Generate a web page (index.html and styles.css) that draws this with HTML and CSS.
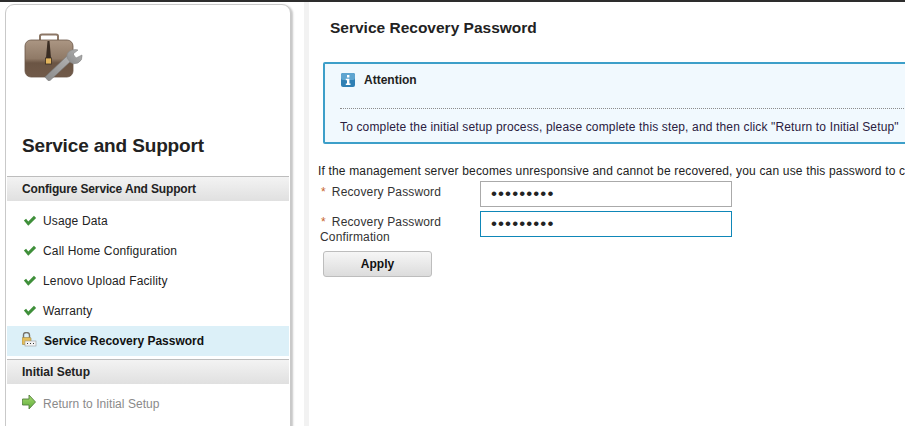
FILE: index.html
```html
<!DOCTYPE html>
<html lang="en">
	<head>
		<meta charset="UTF-8" />
		<meta name="viewport" content="width=device-width, initial-scale=1.0" />
		<title>Service and Support</title>
		<link rel="stylesheet" href="styles.css">
	</head>

	<body>
		<div class="topbar"></div>
		<div class="page">
			<div class="sidebar">
				<div class="sidebar-head">
					<svg class="case-icon" width="62" height="50" viewBox="0 0 62 50">
						<defs>
							<linearGradient id="caseFill" x1="0" y1="0" x2="0" y2="1">
								<stop offset="0" stop-color="#ab9683" />
								<stop offset="0.5" stop-color="#907a67" />
								<stop offset="0.62" stop-color="#6b5544" />
								<stop offset="1" stop-color="#715a49" />
							</linearGradient>
							<linearGradient id="wrenchFill" x1="0" y1="1" x2="1" y2="0">
								<stop offset="0" stop-color="#8a8a8a" />
								<stop offset="1" stop-color="#b4b4b4" />
							</linearGradient>
						</defs>
						<path d="M16 9V4Q16 2.500 18 2.500H32Q34 2.500 34 4V9" fill="none" stroke="#8c7766" stroke-width="2" />
						<rect x="1" y="8" width="48" height="37" rx="6" fill="url(#caseFill)" stroke="#6a5646" stroke-width="0.800" />
						<path d="M23.500 9H25.500L27 26H22Z" fill="#3a2d23" />
						<rect x="21.500" y="26" width="6" height="6" fill="#e2b45c" stroke="#3a2d23" stroke-width="0.800" />
						<path d="M21 45L24 48.500L26 48.500L48 28L43 24Z" fill="url(#wrenchFill)" stroke="#777" stroke-width="0.600" />
						<path d="M43 26Q42 20 48 18Q52 17 54 18L49 22L52 26L58 23Q59 28 54 31Q49 33 46 30Z" fill="url(#wrenchFill)" stroke="#888" stroke-width="0.600" />
					</svg>
					<h1 class="sidebar-title">Service and Support</h1>
				</div>

				<div class="group-head">Configure Service And Support</div>
				<ul class="nav">
					<li class="nav-item">
						<svg class="nav-icon" width="14" height="14" viewBox="0 0 16 16"><path d="M1 7.500L3.500 5.500L6 8.500L12.500 2L15 4.500L6 13.500Z" fill="#3f8f3a" /></svg>
						<span>Usage Data</span>
					</li>
					<li class="nav-item">
						<svg class="nav-icon" width="14" height="14" viewBox="0 0 16 16"><path d="M1 7.500L3.500 5.500L6 8.500L12.500 2L15 4.500L6 13.500Z" fill="#3f8f3a" /></svg>
						<span>Call Home Configuration</span>
					</li>
					<li class="nav-item">
						<svg class="nav-icon" width="14" height="14" viewBox="0 0 16 16"><path d="M1 7.500L3.500 5.500L6 8.500L12.500 2L15 4.500L6 13.500Z" fill="#3f8f3a" /></svg>
						<span>Lenovo Upload Facility</span>
					</li>
					<li class="nav-item">
						<svg class="nav-icon" width="14" height="14" viewBox="0 0 16 16"><path d="M1 7.500L3.500 5.500L6 8.500L12.500 2L15 4.500L6 13.500Z" fill="#3f8f3a" /></svg>
						<span>Warranty</span>
					</li>
					<li class="nav-item active">
						<svg class="nav-icon lock-icon" width="16" height="16" viewBox="2 1 16 16">
							<path d="M3.500 7V4Q3.500 1.500 6.500 1.500Q9.500 1.500 9.500 4V7" fill="none" stroke="#77736a" stroke-width="1.400" />
							<rect x="2" y="6.500" width="9" height="7" rx="1" fill="#e3bd5a" stroke="#9a8340" stroke-width="0.600" />
							<rect x="5" y="10" width="11" height="5" fill="#f4f4f4" stroke="#9a9a9a" stroke-width="0.600" />
							<path d="M7 12.500H8M10 12.500H11M13 12.500H14" stroke="#333" stroke-width="1.200" />
						</svg>
						<span>Service Recovery Password</span>
					</li>
				</ul>

				<div class="group-head second">Initial Setup</div>
				<ul class="nav">
					<li class="nav-item muted">
						<svg class="nav-icon arrow-icon" width="16" height="16" viewBox="1 0 16 16">
							<defs>
								<linearGradient id="arrowFill" x1="0" y1="0" x2="0" y2="1">
									<stop offset="0" stop-color="#a5d86e" />
									<stop offset="1" stop-color="#5fae3c" />
								</linearGradient>
							</defs>
							<path d="M1.500 5H8V1L14.500 8L8 15V11H1.500Q1 8 1.500 5Z" fill="url(#arrowFill)" stroke="#55803f" stroke-width="0.900" />
						</svg>
						<span>Return to Initial Setup</span>
					</li>
				</ul>
			</div>

			<div class="divider-strip"></div>

			<div class="main">
				<h2 class="main-title">Service Recovery Password</h2>

				<div class="attention">
					<div class="attention-head">
						<svg class="info-icon" width="14" height="14" viewBox="0 0 14 14">
							<rect width="14" height="14" rx="2" fill="#2f80b4" />
							<rect width="14" height="7" rx="2" fill="#5fa5d0" />
							<path d="M6 2H8.400V4.500H6ZM4.800 5.800H8.400V10.500H9.500V12H4.800V10.500H6V7.300H4.800Z" fill="#fff" />
						</svg>
						<span>Attention</span>
					</div>
					<p class="attention-text">To complete the initial setup process, please complete this step, and then click "Return to Initial Setup"</p>
				</div>

				<p class="intro">If the management server becomes unresponsive and cannot be recovered, you can use this password to c</p>

				<div class="field">
					<label class="field-label">Recovery Password</label>
					<input class="field-input" type="password" value="123456789">
				</div>
				<div class="field">
					<label class="field-label">Recovery Password Confirmation</label>
					<input class="field-input focused" type="password" value="123456789">
				</div>

				<button class="apply-btn" type="button">Apply</button>
			</div>
		</div>
	</body>
</html>
```

FILE: styles.css
```css
:root {
	--text-color: #222;
	--line-color: #c4c4c4;
	--accent: #3d9fc9;
}

* {
	box-sizing: border-box;
}

html,
body {
	height: 100%;
}

body {
	margin: 0;
	overflow: hidden;
	font-family: "Liberation Sans", Arial, sans-serif;
	font-size: 12px;
	color: var(--text-color);
	background-color: #fff;
}

.topbar {
	height: 2px;
	background-color: #2d2d2d;
}

.page {
	display: flex;
	height: 424px;
}

.sidebar {
	flex: none;
	width: 286px;
	height: 440px;
	margin: 2px 0 0 5px;
	padding: 0 1px;
	background-color: #fff;
	border: 1px solid #c9c9c9;
	border-radius: 9px;
	box-shadow: 2px 1px 2px #c8c8c8;
}

.sidebar-head {
	height: 171px;
	padding: 27px 0 0 15px;
}

.case-icon {
	display: block;
	margin-left: 2px;
}

.sidebar-title {
	margin: 52px 0 0;
	font-size: 19px;
	letter-spacing: -0.15px;
	line-height: 24px;
	font-weight: bold;
}

.group-head {
	height: 25px;
	padding-left: 15px;
	border-top: 1px solid #bdbdbd;
	background: linear-gradient(#f3f3f3, #e0e0e0);
	font-weight: bold;
	letter-spacing: -0.15px;
	line-height: 25px;
}

.group-head.second {
	margin-top: 3px;
	letter-spacing: 0;
}

.nav {
	margin: 0;
	padding: 0;
	list-style: none;
}

.group-head + .nav {
	padding-top: 5px;
}

.nav-item {
	display: flex;
	align-items: center;
	height: 30px;
	padding-left: 16px;
	gap: 6px;
	letter-spacing: 0.15px;
}

.nav-icon {
	flex: none;
}

.nav-item.active {
	background-color: #dcf0f8;
	font-weight: bold;
	letter-spacing: 0;
	color: #111;
}

.lock-icon {
	margin: 0 0 3px -1px;
}

.nav-item.muted {
	gap: 5px;
	letter-spacing: 0.05px;
	color: #8a8a8a;
}

.arrow-icon {
	margin: 0 0 5px -1px;
}

.divider-strip {
	flex: none;
	width: 5px;
	margin-left: 13px;
	background-color: #f2f2f2;
}

.main {
	flex: 1;
	min-width: 0;
	overflow: hidden;
	padding: 0 0 0 9px;
}

.main-title {
	margin: 16px 0 0 12px;
	font-size: 15.5px;
	line-height: 20px;
	font-weight: bold;
}

.attention {
	width: 700px;
	height: 82px;
	margin: 24px 0 0 5px;
	padding: 7px 15px 0 15px;
	background-color: #f1f9fe;
	border: 2px solid var(--accent);
	border-radius: 2px;
}

.attention-head {
	display: flex;
	align-items: center;
	gap: 9px;
	height: 17px;
	padding-left: 1px;
	font-weight: bold;
}

.attention-text {
	margin: 20px 0 0;
	padding-top: 11px;
	border-top: 1px dotted #8c8c8c;
	line-height: 14px;
	letter-spacing: 0.15px;
	white-space: nowrap;
	color: #2a2040;
}

.intro {
	margin: 20px 0 3px;
	line-height: 14px;
	letter-spacing: 0.167px;
	white-space: nowrap;
}

.field {
	display: flex;
	align-items: flex-start;
	padding-left: 2px;
	height: 30px;
}

.field-label {
	flex: none;
	width: 160px;
	padding-top: 4px;
	line-height: 15px;
	letter-spacing: 0.15px;
	color: #333;
}

.field-label::before {
	content: "*";
	margin: 0 6px 0 1px;
	color: #c8642a;
}

.field-input {
	width: 252px;
	height: 26px;
	padding: 0 10px;
	border: 1px solid #aaa;
	background-color: #fff;
	font-family: "Liberation Sans", Arial, sans-serif;
	font-size: 17px;
	letter-spacing: 1.1px;
	color: #222;
	outline: none;
}

.field-input.focused {
	border-color: #0f87b8;
}

.apply-btn {
	display: block;
	width: 109px;
	height: 26px;
	margin: 10px 0 0 5px;
	padding: 0;
	border: 1px solid #bdbdbd;
	border-radius: 3px;
	background: linear-gradient(#f6f6f6, #dcdcdc);
	font-family: "Liberation Sans", Arial, sans-serif;
	font-size: 12px;
	font-weight: bold;
	color: #111;
}
```
